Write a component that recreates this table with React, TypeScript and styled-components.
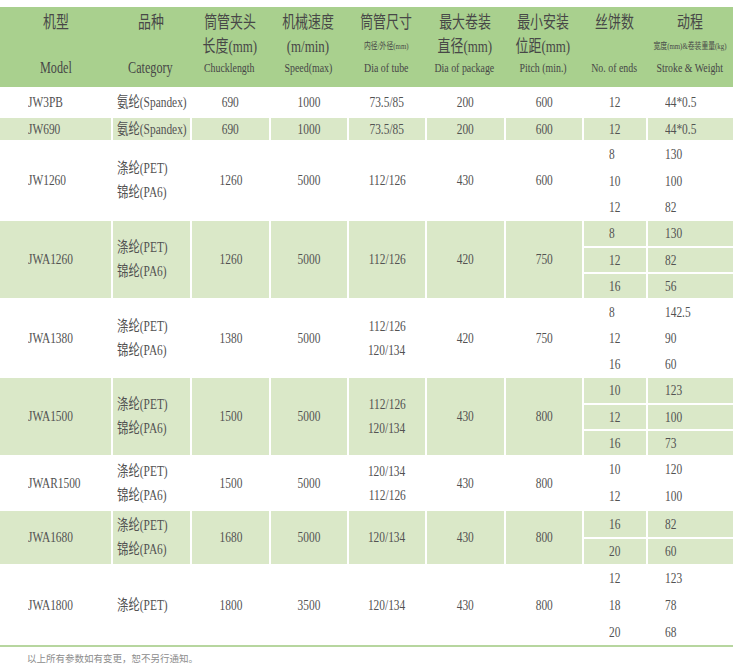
import React from "react";
import styled, { createGlobalStyle } from "styled-components";

const HEAD_GREEN = "#a9d08e";
const ROW_GREEN = "#dae8c8";
const LINE_GREEN = "#b7d69f";
const SERIF = `"Liberation Serif", "Times New Roman", "Noto Sans CJK SC", serif`;

const GlobalStyle = createGlobalStyle`
  * {
    box-sizing: border-box;
  }
  body {
    margin: 0;
    background: #ffffff;
  }
`;

const Page = styled.div`
  width: 733px;
  padding-top: 7px;
  font-family: ${SERIF};
  color: #525252;
`;

const Sheet = styled.table`
  width: 733px;
  table-layout: fixed;
  border-collapse: separate;
  border-spacing: 0;
  font-family: ${SERIF};
  color: #525252;
`;

const Col = styled.col<{ $w: number }>`
  width: ${(p) => p.$w}px;
`;

const HeadCell = styled.th`
  height: 80px;
  padding: 0;
  background: ${HEAD_GREEN};
  font-weight: normal;
  vertical-align: top;
  color: #474747;
`;

const HeadStack = styled.div`
  display: flex;
  flex-direction: column;
  align-items: center;
  padding-top: 4px;
`;

const HeadLine = styled.span<{ $size: number; $h: number }>`
  display: block;
  height: ${(p) => p.$h}px;
  line-height: ${(p) => p.$h}px;
  font-family: ${SERIF};
  font-size: ${(p) => p.$size}px;
  white-space: nowrap;
  transform: scaleX(0.76);
`;

const BodyRow = styled.tr<{ $h: number }>`
  height: ${(p) => p.$h}px;
`;

const BodyCell = styled.td<{ $tint: boolean; $edge?: boolean; $pad: number }>`
  padding: 0 0 1px ${(p) => p.$pad}px;
  border-top: 2px solid #ffffff;
  border-left: ${(p) => (p.$edge ? "none" : "2px solid #ffffff")};
  background: ${(p) => (p.$tint ? ROW_GREEN : "#ffffff")};
  vertical-align: middle;
`;

const Stack = styled.div<{ $left: boolean }>`
  display: flex;
  flex-direction: column;
  align-items: ${(p) => (p.$left ? "flex-start" : "center")};
`;

const Line = styled.span<{ $left: boolean; $h: number }>`
  display: block;
  height: ${(p) => p.$h}px;
  line-height: ${(p) => p.$h}px;
  font-family: ${SERIF};
  font-size: 15px;
  white-space: nowrap;
  transform: scaleX(0.76);
  transform-origin: ${(p) => (p.$left ? "left center" : "center")};
`;

const Note = styled.p`
  margin: 0;
  border-top: 2px solid ${LINE_GREEN};
  padding: 5px 0 0 27px;
  font-family: "Noto Sans CJK SC", sans-serif;
  font-size: 9.5px;
  line-height: 12px;
  color: #8c8c8c;
`;

const COLS = [111, 79, 79, 78, 78, 79, 78, 64, 87];

type Head = { cn: string; sub?: string; small?: boolean; en: string; big?: boolean };

const HEADS: Head[] = [
  { cn: "机型", en: "Model", big: true },
  { cn: "品种", en: "Category", big: true },
  { cn: "筒管夹头", sub: "长度(mm)", en: "Chucklength" },
  { cn: "机械速度", sub: "(m/min)", en: "Speed(max)" },
  { cn: "筒管尺寸", sub: "内径/外径(mm)", small: true, en: "Dia of tube" },
  { cn: "最大卷装", sub: "直径(mm)", en: "Dia of package" },
  { cn: "最小安装", sub: "位距(mm)", en: "Pitch (min.)" },
  { cn: "丝饼数", en: "No. of ends" },
  { cn: "动程", sub: "宽度(mm)&卷装重量(kg)", small: true, en: "Stroke & Weight" },
];

type Group = {
  model: string;
  category: string[];
  chuck: string;
  speed: string;
  tube: string[];
  pkg: string;
  pitch: string;
  ends: string[];
  stroke: string[];
  heights: number[];
  tint: boolean;
};

const BLEND = ["涤纶(PET)", "锦纶(PA6)"];

const GROUPS: Group[] = [
  { model: "JW3PB", category: ["氨纶(Spandex)"], chuck: "690", speed: "1000", tube: ["73.5/85"], pkg: "200", pitch: "600", ends: ["12"], stroke: ["44*0.5"], heights: [29], tint: false },
  { model: "JW690", category: ["氨纶(Spandex)"], chuck: "690", speed: "1000", tube: ["73.5/85"], pkg: "200", pitch: "600", ends: ["12"], stroke: ["44*0.5"], heights: [24], tint: true },
  { model: "JW1260", category: BLEND, chuck: "1260", speed: "5000", tube: ["112/126"], pkg: "430", pitch: "600", ends: ["8", "10", "12"], stroke: ["130", "100", "82"], heights: [27, 26, 26], tint: false },
  { model: "JWA1260", category: BLEND, chuck: "1260", speed: "5000", tube: ["112/126"], pkg: "420", pitch: "750", ends: ["8", "12", "16"], stroke: ["130", "82", "56"], heights: [27, 26, 26], tint: true },
  { model: "JWA1380", category: BLEND, chuck: "1380", speed: "5000", tube: ["112/126", "120/134"], pkg: "420", pitch: "750", ends: ["8", "12", "16"], stroke: ["142.5", "90", "60"], heights: [26, 26, 26], tint: false },
  { model: "JWA1500", category: BLEND, chuck: "1500", speed: "5000", tube: ["112/126", "120/134"], pkg: "430", pitch: "800", ends: ["10", "12", "16"], stroke: ["123", "100", "73"], heights: [27, 26, 26], tint: true },
  { model: "JWAR1500", category: BLEND, chuck: "1500", speed: "5000", tube: ["120/134", "112/126"], pkg: "430", pitch: "800", ends: ["10", "12"], stroke: ["120", "100"], heights: [27, 27], tint: false },
  { model: "JWA1680", category: BLEND, chuck: "1680", speed: "5000", tube: ["120/134"], pkg: "430", pitch: "800", ends: ["16", "20"], stroke: ["82", "60"], heights: [28, 27], tint: true },
  { model: "JWA1800", category: ["涤纶(PET)"], chuck: "1800", speed: "3500", tube: ["120/134"], pkg: "430", pitch: "800", ends: ["12", "18", "20"], stroke: ["123", "78", "68"], heights: [27, 27, 27], tint: false },
];

type CellProps = {
  lines: string[];
  tint: boolean;
  pad?: number;
  left?: boolean;
  edge?: boolean;
  span?: number;
};

const Cell = ({ lines, tint, pad = 0, left = false, edge, span }: CellProps) => (
  <BodyCell rowSpan={span} $tint={tint} $pad={pad} $edge={edge}>
    <Stack $left={left}>
      {lines.map((t) => (
        <Line key={t} $left={left} $h={lines.length > 1 ? 24 : 20}>
          {t}
        </Line>
      ))}
    </Stack>
  </BodyCell>
);

const App = () => (
  <Page>
    <GlobalStyle />
    <Sheet>
      <colgroup>
        {COLS.map((w, i) => (
          <Col key={i} $w={w} />
        ))}
      </colgroup>
      <thead>
        <tr>
          {HEADS.map((h) => (
            <HeadCell key={h.cn}>
              <HeadStack>
                <HeadLine $size={17} $h={24}>
                  {h.cn}
                </HeadLine>
                <HeadLine $size={h.small ? 9 : 17} $h={23}>
                  {h.sub ?? ""}
                </HeadLine>
                <HeadLine $size={h.big ? 16 : 13} $h={20}>
                  {h.en}
                </HeadLine>
              </HeadStack>
            </HeadCell>
          ))}
        </tr>
      </thead>
      <tbody>
        {GROUPS.map((g) =>
          g.heights.map((h, i) => (
            <BodyRow key={g.model + i} $h={h}>
              {i === 0 && (
                <>
                  <Cell lines={[g.model]} tint={g.tint} pad={28} left edge span={g.heights.length} />
                  <Cell lines={g.category} tint={g.tint} pad={4} left span={g.heights.length} />
                  <Cell lines={[g.chuck]} tint={g.tint} span={g.heights.length} />
                  <Cell lines={[g.speed]} tint={g.tint} span={g.heights.length} />
                  <Cell lines={g.tube} tint={g.tint} span={g.heights.length} />
                  <Cell lines={[g.pkg]} tint={g.tint} span={g.heights.length} />
                  <Cell lines={[g.pitch]} tint={g.tint} span={g.heights.length} />
                </>
              )}
              <Cell lines={[g.ends[i]]} tint={g.tint} pad={25} left />
              <Cell lines={[g.stroke[i]]} tint={g.tint} pad={17} left />
            </BodyRow>
          ))
        )}
      </tbody>
    </Sheet>
    <Note>以上所有参数如有变更，恕不另行通知。</Note>
  </Page>
);

export default App;
